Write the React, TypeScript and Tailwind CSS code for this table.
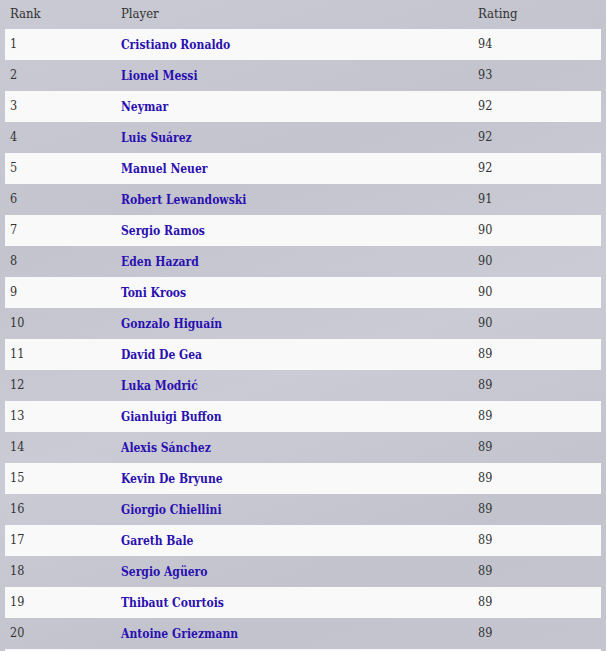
import React from "react";

const players: [number, string, number][] = [
  [1, "Cristiano Ronaldo", 94],
  [2, "Lionel Messi", 93],
  [3, "Neymar", 92],
  [4, "Luis Suárez", 92],
  [5, "Manuel Neuer", 92],
  [6, "Robert Lewandowski", 91],
  [7, "Sergio Ramos", 90],
  [8, "Eden Hazard", 90],
  [9, "Toni Kroos", 90],
  [10, "Gonzalo Higuaín", 90],
  [11, "David De Gea", 89],
  [12, "Luka Modrić", 89],
  [13, "Gianluigi Buffon", 89],
  [14, "Alexis Sánchez", 89],
  [15, "Kevin De Bryune", 89],
  [16, "Giorgio Chiellini", 89],
  [17, "Gareth Bale", 89],
  [18, "Sergio Agüero", 89],
  [19, "Thibaut Courtois", 89],
  [20, "Antoine Griezmann", 89],
];

export default function App() {
  return (
    <div className="w-[606px] h-[651px] overflow-hidden bg-[linear-gradient(160deg,#c9cad3_0%,#c3c4cd_30%,#cacbd4_55%,#c2c3cc_80%,#c4c5ce_100%)] px-[5px] font-['DejaVu_Serif_Condensed','DejaVu_Serif',serif] text-[#333]">
      <div className="flex h-[29px] items-center pb-[2px] text-[13px]">
        <div className="w-[111px] pl-[5px]">Rank</div>
        <div className="w-[357px] pl-[5px]">Player</div>
        <div className="pl-[5px]">Rating</div>
      </div>
      {players.map(([rank, name, rating], i) => (
        <div
          key={rank}
          className={`flex h-[31px] items-center border-b border-transparent pt-[1px] text-[12.5px] ${
            i % 2 === 0 ? "bg-[#f9f9f9]" : "bg-transparent"
          }`}
        >
          <div className="w-[111px] pl-[5px]">{rank}</div>
          <div className="w-[357px] pl-[5px] text-[12px] font-bold text-[#2a10b0]">{name}</div>
          <div className="pl-[5px]">{rating}</div>
        </div>
      ))}
      <div className="h-[31px] bg-[#f9f9f9]" />
    </div>
  );
}
